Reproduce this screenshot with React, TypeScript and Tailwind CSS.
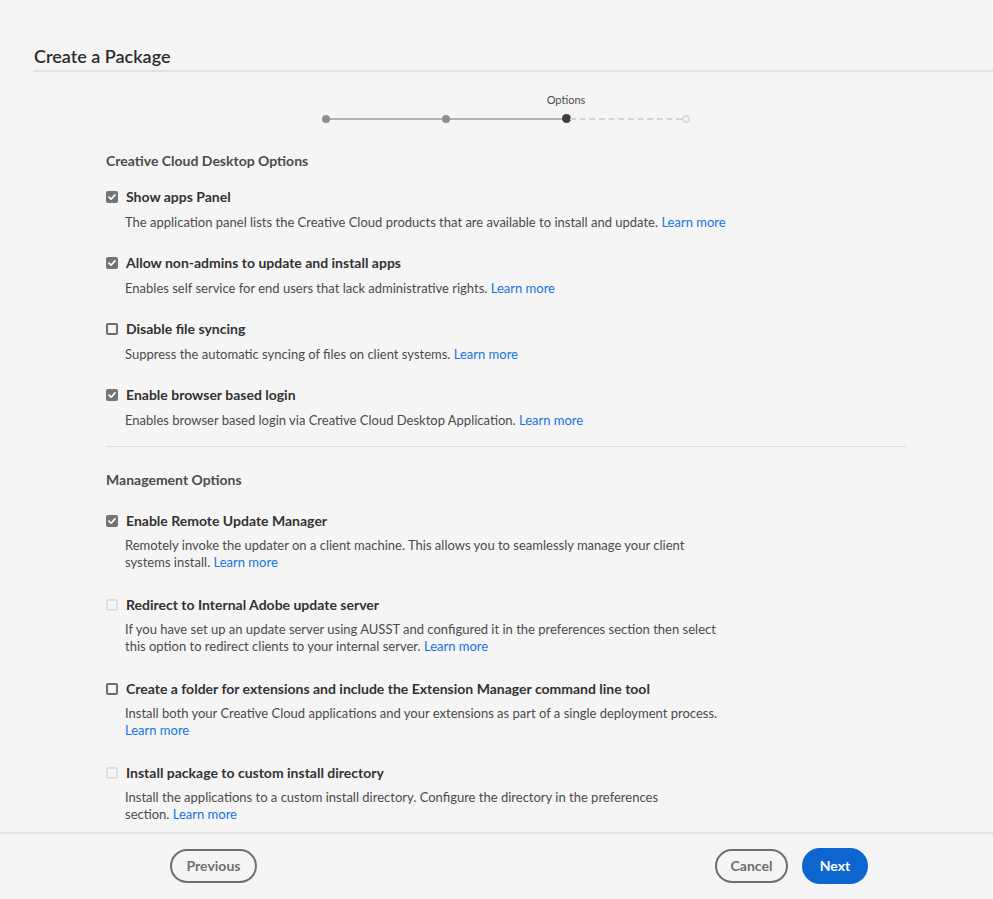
import React from 'react';

type Opt = {
  label: string;
  state: 'checked' | 'unchecked' | 'disabled';
  lines: string[];
};

const desktopOptions: Opt[] = [
  {
    label: 'Show apps Panel',
    state: 'checked',
    lines: ['The application panel lists the Creative Cloud products that are available to install and update.'],
  },
  {
    label: 'Allow non-admins to update and install apps',
    state: 'checked',
    lines: ['Enables self service for end users that lack administrative rights.'],
  },
  {
    label: 'Disable file syncing',
    state: 'unchecked',
    lines: ['Suppress the automatic syncing of files on client systems.'],
  },
  {
    label: 'Enable browser based login',
    state: 'checked',
    lines: ['Enables browser based login via Creative Cloud Desktop Application.'],
  },
];

const managementOptions: Opt[] = [
  {
    label: 'Enable Remote Update Manager',
    state: 'checked',
    lines: [
      'Remotely invoke the updater on a client machine. This allows you to seamlessly manage your client',
      'systems install.',
    ],
  },
  {
    label: 'Redirect to Internal Adobe update server',
    state: 'disabled',
    lines: [
      'If you have set up an update server using AUSST and configured it in the preferences section then select',
      'this option to redirect clients to your internal server.',
    ],
  },
  {
    label: 'Create a folder for extensions and include the Extension Manager command line tool',
    state: 'unchecked',
    lines: [
      'Install both your Creative Cloud applications and your extensions as part of a single deployment process.',
      '',
    ],
  },
  {
    label: 'Install package to custom install directory',
    state: 'disabled',
    lines: [
      'Install the applications to a custom install directory. Configure the directory in the preferences',
      'section.',
    ],
  },
];

function Checkbox({ state }: { state: Opt['state'] }) {
  if (state === 'checked') {
    return (
      <span className="w-3 h-3 rounded-[2px] bg-[#747474] flex items-center justify-center shrink-0">
        <svg width="10" height="10" viewBox="0 0 10 10">
          <path d="M2 5.2 L4.1 7.2 L8 2.9" fill="none" stroke="white" strokeWidth="1.7" strokeLinecap="round" strokeLinejoin="round" />
        </svg>
      </span>
    );
  }
  return (
    <span
      className={`w-3 h-3 rounded-[2px] border-2 shrink-0 ${
        state === 'disabled' ? 'border-[#dedede]' : 'border-[#6e6e6e]'
      }`}
    />
  );
}

function OptionRow({ opt }: { opt: Opt }) {
  return (
    <div>
      <div className="flex items-center gap-2 h-5">
        <Checkbox state={opt.state} />
        <span className="text-[14px] font-bold text-[#323232] leading-5 whitespace-nowrap">{opt.label}</span>
      </div>
      <div className="mt-[6.5px] pl-[19px] text-[13px] leading-[17px] text-[#4b4b4b]">
        {opt.lines.map((line, i) => {
          const last = i === opt.lines.length - 1;
          return (
            <div key={i} className="whitespace-nowrap">
              {line}
              {last && (
                <>
                  {line ? ' ' : ''}
                  <a className="text-[#1473e6]">Learn more</a>
                </>
              )}
            </div>
          );
        })}
      </div>
    </div>
  );
}

function Stepper() {
  return (
    <div className="flex justify-center pt-[21px]">
      <div className="flex items-end">
        <div className="flex flex-col items-center w-2">
          <span className="h-[14px]" />
          <span className="mt-[7px] w-2 h-2 rounded-full bg-[#8e8e8e]" />
        </div>
        <span className="w-[112px] h-[2px] bg-[#b3b3b3] mb-[3px]" />
        <div className="flex flex-col items-center w-2">
          <span className="h-[14px]" />
          <span className="mt-[7px] w-2 h-2 rounded-full bg-[#8e8e8e]" />
        </div>
        <span className="w-[112px] h-[2px] bg-[#b3b3b3] mb-[3px]" />
        <div className="flex flex-col items-center w-2">
          <span className="h-[14px] text-[11px] leading-[14px] text-[#4b4b4b] whitespace-nowrap">Options</span>
          <span className="mt-[7px] w-[9px] h-[9px] rounded-full bg-[#3e3e3e]" />
        </div>
        <span className="w-[112px] mb-[3px] border-t-2 border-dashed border-[#d3d3d3]" />
        <div className="flex flex-col items-center w-2">
          <span className="h-[14px]" />
          <span className="mt-[7px] w-2 h-2 rounded-full border-2 border-[#dadada]" />
        </div>
      </div>
    </div>
  );
}

export default function App() {
  return (
    <div
      className="h-screen flex flex-col bg-[#f5f5f5] overflow-hidden"
      style={{ fontFamily: 'Lato, "Noto Sans", sans-serif' }}
    >
      {/* Header */}
      <div className="ml-[33px] pt-[45px] pb-[3px] border-b-2 border-[#e1e1e1]">
        <h1 className="pl-px text-[18px] leading-[22px] font-semibold text-[#2c2c2c]">Create a Package</h1>
      </div>

      <main className="flex-1 ml-[106px] w-[800px]">
        <Stepper />

        <h2 className="mt-[28px] text-[14px] leading-5 font-bold text-[#4b4b4b]">Creative Cloud Desktop Options</h2>
        <div className="mt-[16px] flex flex-col gap-[22.5px]">
          {desktopOptions.map((o) => (
            <OptionRow key={o.label} opt={o} />
          ))}
        </div>

        <div className="mt-[17px] h-px bg-[#dcdcdc]" />

        <h2 className="mt-[23px] text-[14px] leading-5 font-bold text-[#4b4b4b]">Management Options</h2>
        <div className="mt-[21px] flex flex-col gap-[23.5px]">
          {managementOptions.map((o) => (
            <OptionRow key={o.label} opt={o} />
          ))}
        </div>
      </main>

      {/* Footer */}
      <footer className="h-[67px] shrink-0 border-t-2 border-[#e1e1e1] flex items-center justify-between pb-[2px] pl-[170px] pr-[125px]">
        <button className="h-[34px] w-[87px] rounded-full border-2 border-[#6e6e6e] text-[14px] font-bold text-[#6e6e6e]">
          Previous
        </button>
        <div className="flex items-center gap-[14px]">
          <button className="h-[34px] w-[73px] rounded-full border-2 border-[#6e6e6e] text-[14px] font-bold text-[#6e6e6e]">
            Cancel
          </button>
          <button className="h-[36px] w-[66px] rounded-full bg-[#0d66d0] text-[14px] font-bold text-white">
            Next
          </button>
        </div>
      </footer>
    </div>
  );
}
